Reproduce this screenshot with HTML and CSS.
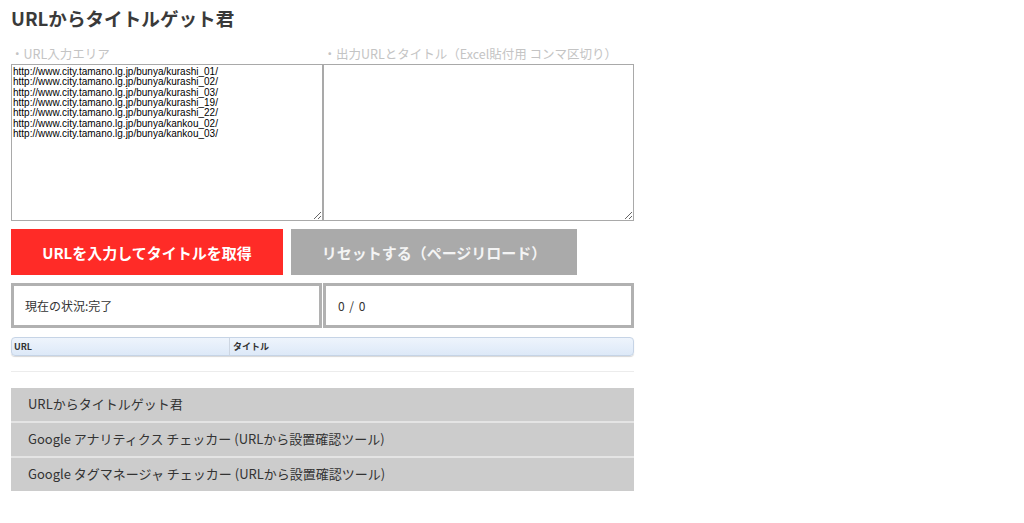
FILE: index.html
```html
<!DOCTYPE html>
<html lang="ja">
<head>
<meta charset="utf-8">
<title>URLからタイトルゲット君</title>
<link rel="stylesheet" href="styles.css">
</head>
<body>
<div class="page">
  <h1 class="title">URLからタイトルゲット君</h1>
  <div class="labels">
    <div class="label">・URL入力エリア</div>
    <div class="label">・出力URLとタイトル（Excel貼付用 コンマ区切り）</div>
  </div>
  <div class="areas">
    <textarea class="area">http://www.city.tamano.lg.jp/bunya/kurashi_01/
http://www.city.tamano.lg.jp/bunya/kurashi_02/
http://www.city.tamano.lg.jp/bunya/kurashi_03/
http://www.city.tamano.lg.jp/bunya/kurashi_19/
http://www.city.tamano.lg.jp/bunya/kurashi_22/
http://www.city.tamano.lg.jp/bunya/kankou_02/
http://www.city.tamano.lg.jp/bunya/kankou_03/</textarea>
    <textarea class="area"></textarea>
  </div>
  <div class="buttons">
    <button class="btn btn-red">URLを入力してタイトルを取得</button>
    <button class="btn btn-gray">リセットする（ページリロード）</button>
  </div>
  <div class="status">
    <div class="status-box">現在の状況:完了</div>
    <div class="status-box status-count">0 / 0</div>
  </div>
  <div class="grid-head">
    <div class="col col-url">URL</div>
    <div class="col col-title">タイトル</div>
  </div>
  <hr class="rule">
  <ul class="menu">
    <li class="menu-item">URLからタイトルゲット君</li>
    <li class="menu-item">Google アナリティクス チェッカー (URLから設置確認ツール)</li>
    <li class="menu-item">Google タグマネージャ チェッカー (URLから設置確認ツール)</li>
  </ul>
</div>
</body>
</html>
```

FILE: styles.css
```css
html, body {
  margin: 0;
  padding: 0;
  background: #fff;
}
body {
  font-family: "Noto Sans CJK JP", "Noto Sans", sans-serif;
  color: #333;
}
.page {
  width: 623px;
  padding: 4px 0 0 11px;
}
.title {
  margin: 0;
  font-size: 18.6px;
  line-height: 28px;
  font-weight: bold;
  color: #3a3a3a;
}
.labels {
  display: flex;
  margin-top: 12px;
  height: 20px;
}
.label {
  width: 50%;
  font-size: 12.5px;
  line-height: 20px;
  color: #c4c4c4;
}
.label + .label {
  padding-left: 2px;
}
.areas {
  display: flex;
}
.area {
  display: block;
  width: 50%;
  height: 157px;
  box-sizing: border-box;
  margin: 0;
  border: 1px solid #a9a9a9;
  padding: 2px 1px;
  font-family: "Liberation Sans", Arial, sans-serif;
  font-size: 10px;
  line-height: 10.35px;
  color: #000;
  background: #fff;
  resize: both;
  outline: none;
}
.buttons {
  display: flex;
  gap: 8px;
  margin-top: 8px;
}
.btn {
  height: 46px;
  border: 0;
  margin: 0;
  padding: 0;
  font-family: "Noto Sans CJK JP", sans-serif;
  font-size: 15px;
  font-weight: bold;
  cursor: pointer;
}
.btn-red {
  width: 272px;
  background: #ff2b27;
  color: #fff;
}
.btn-gray {
  width: 286px;
  background: #aaaaaa;
  color: #f4f4f4;
}
.status {
  display: flex;
  justify-content: space-between;
  margin-top: 8px;
}
.status-box {
  width: 311px;
  height: 45px;
  box-sizing: border-box;
  border: 3px solid #b1b1b1;
  padding: 0 11px;
  font-size: 12px;
  line-height: 39px;
  color: #333;
}
.status-count {
  padding-left: 12px;
  letter-spacing: 1px;
}
.grid-head {
  display: flex;
  margin-top: 9px;
  height: 19px;
  box-sizing: border-box;
  border: 1px solid #c6d4e6;
  border-radius: 4px;
  background: linear-gradient(#eef4fc, #dde9f8);
  box-shadow: 0 1px 1px #d8d8d8;
}
.col {
  font-size: 9px;
  font-weight: bold;
  line-height: 17px;
  color: #333;
  padding-left: 2px;
}
.col-url {
  width: 215px;
  border-right: 1px solid #cdd6e2;
}
.col-title {
  flex: 1;
  padding-left: 3px;
}
.rule {
  margin: 15px 0 0;
  border: 0;
  height: 1px;
  background: #ececec;
}
.menu {
  list-style: none;
  margin: 16px 0 0;
  padding: 0;
}
.menu-item {
  height: 33px;
  line-height: 32px;
  background: #cccccc;
  padding-left: 17px;
  font-size: 13px;
  color: #333;
}
.menu-item + .menu-item {
  border-top: 2px solid #e4e4e4;
}
```
